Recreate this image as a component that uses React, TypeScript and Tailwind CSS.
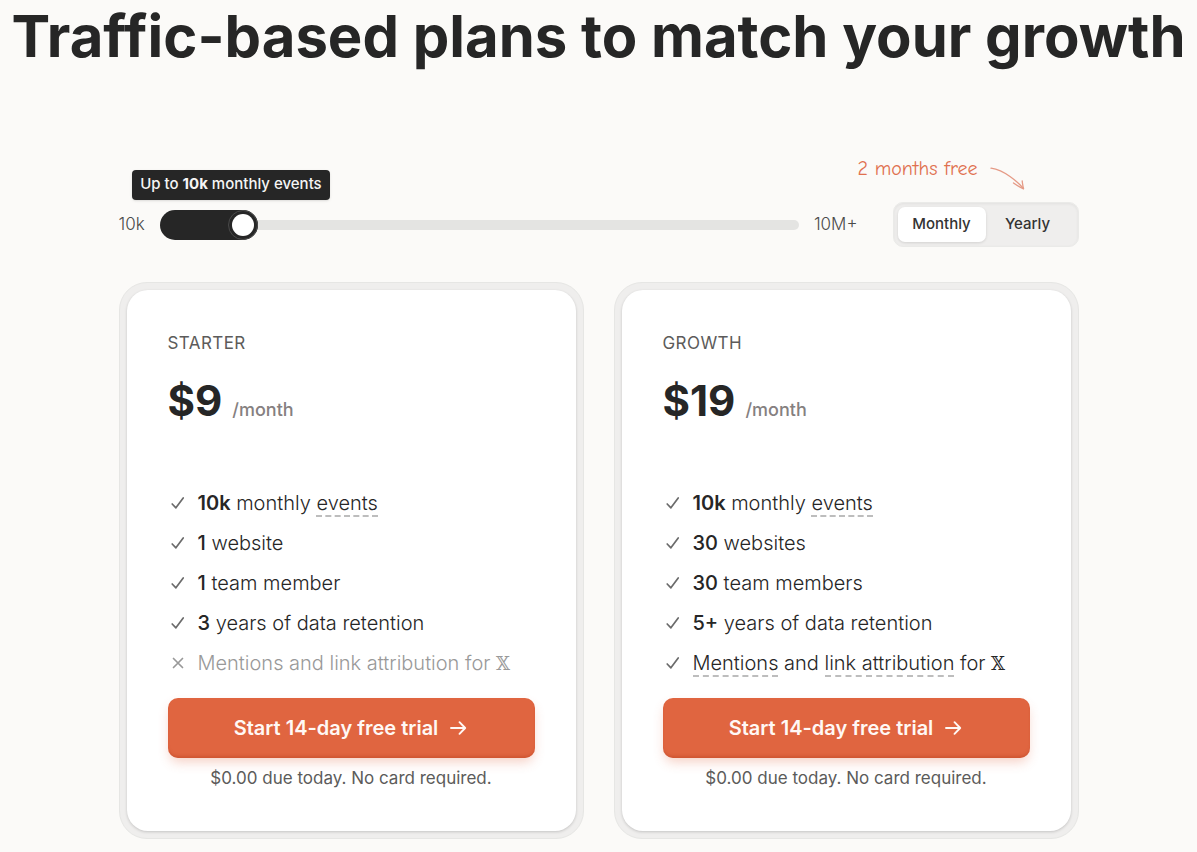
import { useState, type FC, type ReactNode } from "react";

interface IFeature {
  label: ReactNode;
  disabled?: boolean;
}

interface IPlan {
  name: string;
  monthly: number;
  features: IFeature[];
}

const MIN_FILL = 98;

const Hint: FC<{ children: ReactNode }> = ({ children }) => (
  <span className="border-b-2 border-dashed border-[#bdbdbd]">{children}</span>
);

const Amount: FC<{ children: ReactNode }> = ({ children }) => (
  <span className="font-medium">{children}</span>
);

const XMark = () => (
  <span className="font-['DejaVu_Serif',serif] text-lg">𝕏</span>
);

const FeatureIcon: FC<{ disabled?: boolean }> = ({ disabled }) => (
  <svg
    viewBox="0 0 20 20"
    className={`size-5 shrink-0 ${disabled ? "text-[#999]" : "text-[#6b6b6b]"}`}
    fill="none"
    stroke="currentColor"
    strokeWidth="1.700"
    strokeLinecap="round"
    strokeLinejoin="round"
    aria-hidden="true"
  >
    {disabled ? (
      <path d="M5.500 5.500l9 9M14.500 5.500l-9 9" />
    ) : (
      <path d="M4.200 11l3.700 3.800L15.200 5" />
    )}
  </svg>
);

const plans: IPlan[] = [
  {
    name: "Starter",
    monthly: 9,
    features: [
      {
        label: (
          <>
            <span className="font-semibold">10k</span> monthly{" "}
            <Hint>events</Hint>
          </>
        ),
      },
      { label: <><Amount>1</Amount> website</> },
      { label: <><Amount>1</Amount> team member</> },
      { label: <><Amount>3</Amount> years of data retention</> },
      {
        label: <>Mentions and link attribution for <XMark /></>,
        disabled: true,
      },
    ],
  },
  {
    name: "Growth",
    monthly: 19,
    features: [
      {
        label: (
          <>
            <span className="font-semibold">10k</span> monthly{" "}
            <Hint>events</Hint>
          </>
        ),
      },
      { label: <><Amount>30</Amount> websites</> },
      { label: <><Amount>30</Amount> team members</> },
      { label: <><Amount>5+</Amount> years of data retention</> },
      {
        label: (
          <>
            <Hint>Mentions</Hint> and <Hint>link attribution</Hint> for{" "}
            <XMark />
          </>
        ),
      },
    ],
  },
];

const EventsSlider: FC = () => {
  const [step, setStep] = useState(0);
  const fill = `calc(${MIN_FILL}px + (100% - ${MIN_FILL}px) * ${step / 8})`;

  return (
    <div className="flex flex-1 items-center gap-[15px] text-[17px] font-light text-[#4a4a4a]">
      <span>10k</span>
      <div className="relative flex h-[30px] flex-1 items-center">
        <div className="h-2.5 w-full rounded-full bg-[#e4e4e2]"></div>
        <div
          className="absolute inset-y-0 left-0 flex justify-end rounded-full bg-[#262626]"
          style={{ width: fill }}
        >
          <div className="size-[30px] rounded-full border border-[#4a4a4a] bg-[#262626] p-[3px]">
            <div className="size-full rounded-full bg-white"></div>
          </div>
          <div className="absolute -right-[72px] bottom-10 flex h-[30px] items-center rounded bg-[#262626] px-2 text-[15px] font-medium whitespace-nowrap text-[#f5f5f5] shadow">
            <span>
              Up to <b className="font-bold">10k</b> monthly events
            </span>
          </div>
        </div>
        <input
          type="range"
          min={0}
          max={8}
          value={step}
          onChange={(e) => setStep(Number(e.target.value))}
          aria-label="Monthly events"
          className="absolute inset-0 w-full cursor-pointer opacity-0"
        />
      </div>
      <span>10M+</span>
    </div>
  );
};

interface IToggleProps {
  yearly: boolean;
  onChange: (yearly: boolean) => void;
}

const BillingToggle: FC<IToggleProps> = ({ yearly, onChange }) => {
  const active = "bg-white shadow-[0_1px_3px_rgba(0,0,0,0.12)]";

  return (
    <div className="relative grid w-[186px] grid-cols-2 rounded-[10px] border border-[#eaeae8] bg-[#efeeed] p-1 text-[15px] font-medium text-[#333] shadow-[inset_0_1px_3px_rgba(0,0,0,0.06)]">
      <div className="absolute right-[52px] bottom-full mb-3.5 flex h-[30px] items-start gap-3 text-[#e0704f]">
        <span className="font-['Comic_Neue','Lato',cursive] text-xl leading-5 whitespace-nowrap">
          2 months free
        </span>
        <svg
          viewBox="0 0 36 24"
          className="mt-2 h-6 w-9 shrink-0 text-[#e59a86]"
          fill="none"
          stroke="currentColor"
          strokeWidth="1.3"
          strokeLinecap="round"
          strokeLinejoin="round"
          aria-hidden="true"
        >
          <path d="M1 1.2C9 2.500 15 6 20 9.500c5 3.500 9 7 13.500 12" />
          <path d="M23.500 16c3 2.400 6.500 4.200 10 5.800-.6-3-1.200-5.300-1.300-8" />
        </svg>
      </div>
      <button
        type="button"
        aria-pressed={!yearly}
        onClick={() => onChange(false)}
        className={`h-[35px] rounded-[7px] ${yearly ? "" : active}`}
      >
        Monthly
      </button>
      <button
        type="button"
        aria-pressed={yearly}
        onClick={() => onChange(true)}
        className={`h-[35px] rounded-[7px] pr-1 ${yearly ? active : ""}`}
      >
        Yearly
      </button>
    </div>
  );
};

const PlanCard: FC<{ plan: IPlan; yearly: boolean }> = ({ plan, yearly }) => {
  const price = yearly ? Math.round((plan.monthly * 10) / 12) : plan.monthly;

  return (
    <section className="rounded-[28px] border border-[#e6e6e4] bg-[#efeeed] p-[7px]">
      <div className="rounded-[21px] bg-white p-[41px] shadow-[0_1px_3px_rgba(0,0,0,0.18)]">
        <h2 className="text-[17px] leading-6 tracking-wide text-[#5c5b5a] uppercase">
          {plan.name}
        </h2>

        <p className="mt-[21px] flex items-baseline gap-2.5">
          <span className="text-[42px] leading-[50px] font-bold">${price}</span>
          <span className="text-lg font-medium text-[#858080]">/month</span>
        </p>

        <ul className="mt-[57px] text-xl leading-10 font-[350]">
          {plan.features.map((feature, i) => (
            <li
              key={i}
              className={`flex h-10 items-center gap-2.5 ${feature.disabled ? "text-[#999]" : ""}`}
            >
              <FeatureIcon disabled={feature.disabled} />
              <span className="whitespace-nowrap">{feature.label}</span>
            </li>
          ))}
        </ul>

        <button
          type="button"
          className="mt-[15px] flex h-[60px] w-full items-center justify-center gap-2.5 rounded-[10px] bg-[#e06540] text-xl font-semibold text-[#fff8f5] shadow-[0_6px_12px_-2px_rgba(224,101,64,0.3),inset_0_-3px_3px_-1px_rgba(190,70,35,0.5)]"
        >
          Start 14-day free trial
          <svg
            viewBox="0 0 20 20"
            className="size-5"
            fill="none"
            stroke="currentColor"
            strokeWidth="1.9"
            strokeLinecap="round"
            strokeLinejoin="round"
            aria-hidden="true"
          >
            <path d="M3 10h14M11.500 4.200L17.200 10l-5.700 5.800" />
          </svg>
        </button>
        <p className="mt-2 text-center text-[17px] leading-6 text-[#5c5b5a]">
          $0.00 due today. No card required.
        </p>
      </div>
    </section>
  );
};

const App: FC = () => {
  const [yearly, setYearly] = useState(false);

  return (
    <main className="min-h-screen overflow-x-hidden bg-[#fbfaf8] pb-3 font-['Inter',sans-serif] text-[#262626]">
      <h1 className="pt-1.5 text-center text-[58px] leading-[60px] font-bold whitespace-nowrap">
        Traffic-based plans to match your growth
      </h1>

      <div className="mx-auto mt-[136px] max-w-[960px]">
        <div className="flex items-center gap-[35px]">
          <EventsSlider />
          <BillingToggle yearly={yearly} onChange={setYearly} />
        </div>

        <div className="mt-[35px] grid grid-cols-2 gap-[30px]">
          {plans.map((plan) => (
            <PlanCard key={plan.name} plan={plan} yearly={yearly} />
          ))}
        </div>
      </div>
    </main>
  );
};

export default App;
